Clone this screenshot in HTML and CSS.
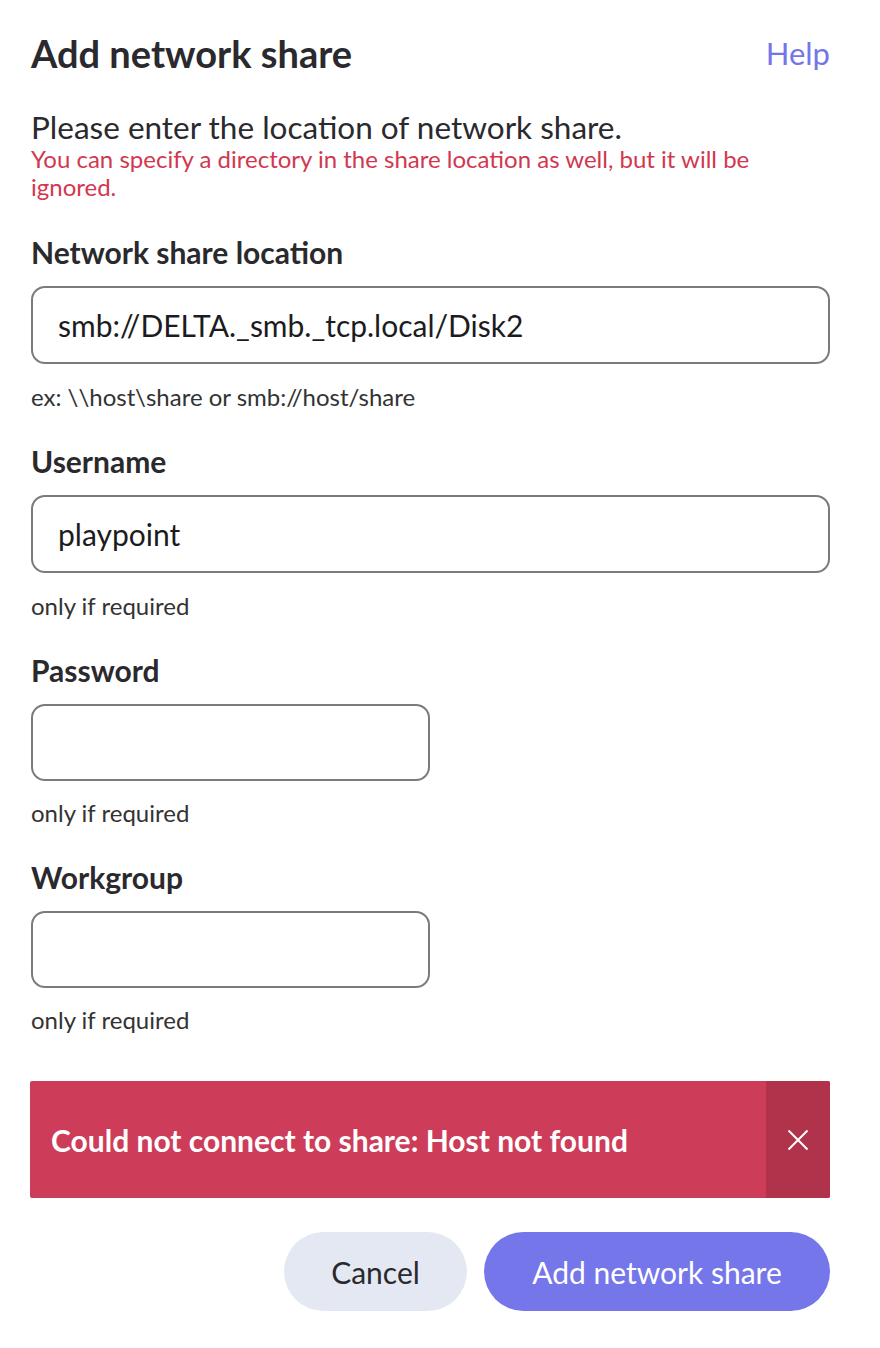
FILE: index.html
```html
<!DOCTYPE html>
<html lang="en">
<head>
<meta charset="utf-8">
<title>Add network share</title>
<link rel="stylesheet" href="styles.css">
</head>
<body>
<div class="dialog">
  <header class="dialog-header">
    <h1 class="dialog-title">Add network share</h1>
    <a class="help-link" href="#">Help</a>
  </header>

  <div class="intro">
    <p class="intro-text">Please enter the location of network share.</p>
    <p class="intro-warning">You can specify a directory in the share location as well, but it will be ignored.</p>
  </div>

  <div class="field">
    <label class="field-label">Network share location</label>
    <div class="input input-wide">smb://DELTA._smb._tcp.local/Disk2</div>
    <div class="field-hint">ex: \\host\share or smb://host/share</div>
  </div>

  <div class="field">
    <label class="field-label">Username</label>
    <div class="input input-wide">playpoint</div>
    <div class="field-hint">only if required</div>
  </div>

  <div class="field">
    <label class="field-label">Password</label>
    <div class="input input-narrow"></div>
    <div class="field-hint">only if required</div>
  </div>

  <div class="field">
    <label class="field-label">Workgroup</label>
    <div class="input input-narrow"></div>
    <div class="field-hint">only if required</div>
  </div>

  <div class="alert">
    <div class="alert-text">Could not connect to share: Host not found</div>
    <button class="alert-close" aria-label="Close">
      <svg width="22" height="22" viewBox="0 0 22 22"><path d="M1.5 1.5L20.5 20.5M20.5 1.5L1.5 20.5" stroke="#fff" stroke-width="2" fill="none"/></svg>
    </button>
  </div>

  <div class="actions">
    <button class="btn btn-secondary">Cancel</button>
    <button class="btn btn-primary">Add network share</button>
  </div>
</div>
</body>
</html>
```
FILE: styles.css
```css
* { box-sizing: border-box; }
html, body { margin: 0; padding: 0; background: #fff; }
body {
  font-family: Lato, "Open Sans", sans-serif;
  color: #2a2a2e;
}
.dialog {
  padding: 30px 50px 0 31px;
  width: 880px;
}
.dialog-header {
  display: flex;
  justify-content: space-between;
  align-items: center;
  height: 46px;
}
.dialog-title {
  margin: 0;
  font-size: 38px;
  font-weight: 700;
  line-height: 46px;
  color: #2a2a2e;
}
.help-link {
  font-size: 31px;
  line-height: 46px;
  color: #7476e8;
  text-decoration: none;
}
.intro {
  margin-top: 34px;
}
.intro-text {
  margin: 0;
  font-size: 31.5px;
  line-height: 35px;
}
.intro-warning {
  margin: 0;
  font-size: 24px;
  line-height: 28px;
  color: #d2374f;
}
.field {
  margin-top: 32px;
}
.intro + .field { margin-top: 33px; }
.field-label {
  display: block;
  font-size: 30px;
  font-weight: 700;
  line-height: 36px;
}
.input {
  margin-top: 16px;
  height: 78px;
  border: 2px solid #7b7b7d;
  border-radius: 14px;
  padding: 0 25px;
  display: flex;
  align-items: center;
  font-size: 30px;
  color: #1c1c1e;
}
.input-wide { width: 799px; }
.input-narrow { width: 399px; height: 77px; }
.field-hint {
  margin-top: 19px;
  font-size: 24px;
  line-height: 28px;
  color: #333;
}
.input-narrow + .field-hint { margin-top: 18px; }
.alert {
  margin-top: 47px;
  margin-left: -1px;
  width: 800px;
  height: 117px;
  background: #cd3d59;
  display: flex;
  align-items: stretch;
  border-radius: 2px;
}
.alert-text {
  flex: 1;
  display: flex;
  align-items: center;
  padding-left: 21px;
  font-size: 30px;
  font-weight: 700;
  color: #fff;
}
.alert-close {
  width: 64px;
  border: 0;
  background: #b0334b;
  display: flex;
  align-items: center;
  justify-content: center;
  padding: 0;
  border-radius: 0 2px 2px 0;
}
.actions {
  margin-top: 34px;
  width: 799px;
  display: flex;
  justify-content: flex-end;
  gap: 17px;
}
.btn {
  height: 79px;
  border: 0;
  border-radius: 40px;
  font-family: Lato, "Open Sans", sans-serif;
  font-size: 30px;
  padding: 0;
}
.btn-secondary {
  background: #e4e8f2;
  color: #2a2a2e;
  width: 183px;
}
.btn-primary {
  background: #7576ea;
  color: #fff;
  width: 346px;
}
```
